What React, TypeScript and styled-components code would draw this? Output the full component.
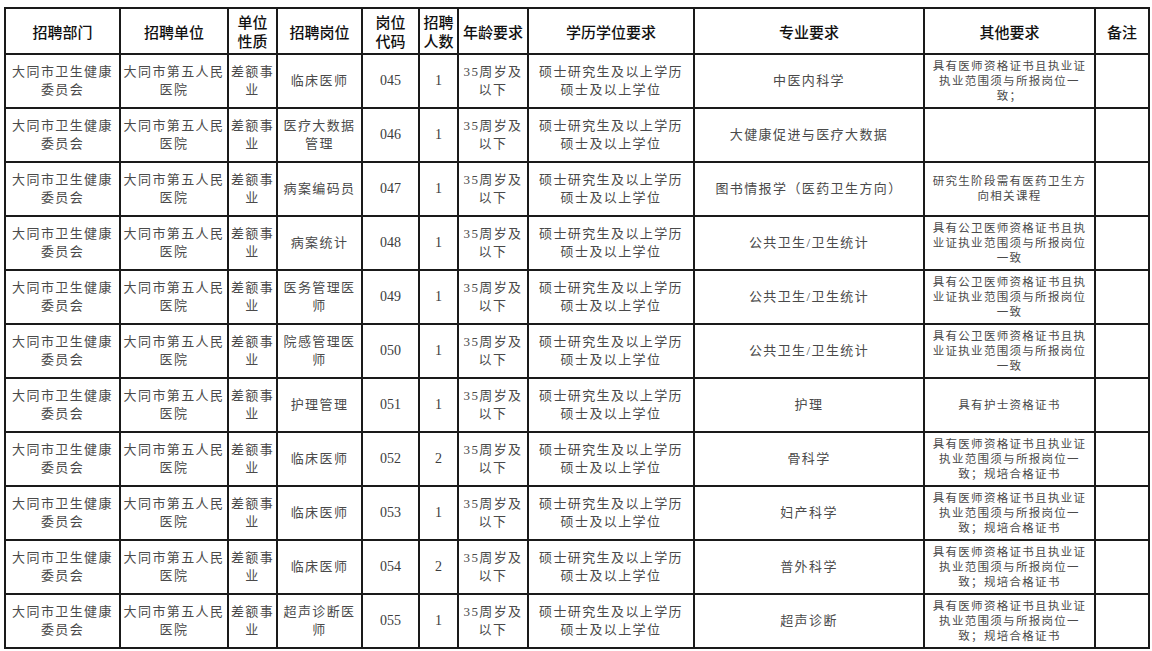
import React from 'react';
import styled, { createGlobalStyle } from 'styled-components';

const GlobalStyle = createGlobalStyle`
  html, body {
    margin: 0;
    padding: 0;
    background: #ffffff;
  }
  body {
    font-family: "Noto Sans CJK SC", "Noto Sans", sans-serif;
  }
`;

const Page = styled.div`
  width: 1152px;
  height: 651px;
  padding: 7px 0 0 4px;
  box-sizing: border-box;
  background: #fff;
`;

const Sheet = styled.table`
  border-collapse: collapse;
  table-layout: fixed;
  width: 1144px;
  border: 2px solid #111;
`;

const HeadRow = styled.tr`
  height: 46px;
`;

const BodyRow = styled.tr`
  height: 54px;
`;

const HeadCell = styled.th`
  border: 2px solid #1a1a1a;
  padding: 0;
  font-family: "Noto Sans CJK SC", sans-serif;
  font-weight: 500;
  font-size: 15px;
  line-height: 19px;
  color: #111;
  text-align: center;
  vertical-align: middle;
`;

const Cell = styled.td<{ $small?: boolean; $num?: boolean }>`
  border: 2px solid #1a1a1a;
  padding: 0;
  text-align: center;
  vertical-align: middle;
  color: ${p => (p.$num ? '#3c3c3c' : '#4a4a4a')};
  font-family: "Liberation Serif", "Noto Sans CJK SC", serif;
  font-size: ${p => (p.$small ? '11.5px' : p.$num ? '14px' : '13px')};
  line-height: ${p => (p.$small ? '15px' : '18px')};
  letter-spacing: ${p => (p.$small ? '1.3px' : p.$num ? '0' : '1.4px')};
  white-space: nowrap;
`;

const Line = styled.div`
  display: block;
`;

const widths = [115, 108, 49, 85, 57, 39, 70, 166, 230, 171, 54];

const headers: string[][] = [
  ['招聘部门'],
  ['招聘单位'],
  ['单位', '性质'],
  ['招聘岗位'],
  ['岗位', '代码'],
  ['招聘', '人数'],
  ['年龄要求'],
  ['学历学位要求'],
  ['专业要求'],
  ['其他要求'],
  ['备注'],
];

interface Post {
  name: string[];
  code: string;
  count: string;
  major: string;
  other: string[];
}

const doctorNote = ['具有医师资格证书且执业证', '执业范围须与所报岗位一', '致；规培合格证书'];
const publicNote = ['具有公卫医师资格证书且执', '业证执业范围须与所报岗位', '一致'];

const posts: Post[] = [
  { name: ['临床医师'], code: '045', count: '1', major: '中医内科学', other: ['具有医师资格证书且执业证', '执业范围须与所报岗位一', '致；'] },
  { name: ['医疗大数据', '管理'], code: '046', count: '1', major: '大健康促进与医疗大数据', other: [] },
  { name: ['病案编码员'], code: '047', count: '1', major: '图书情报学（医药卫生方向）', other: ['研究生阶段需有医药卫生方', '向相关课程'] },
  { name: ['病案统计'], code: '048', count: '1', major: '公共卫生/卫生统计', other: publicNote },
  { name: ['医务管理医', '师'], code: '049', count: '1', major: '公共卫生/卫生统计', other: publicNote },
  { name: ['院感管理医', '师'], code: '050', count: '1', major: '公共卫生/卫生统计', other: publicNote },
  { name: ['护理管理'], code: '051', count: '1', major: '护理', other: ['具有护士资格证书'] },
  { name: ['临床医师'], code: '052', count: '2', major: '骨科学', other: doctorNote },
  { name: ['临床医师'], code: '053', count: '1', major: '妇产科学', other: doctorNote },
  { name: ['临床医师'], code: '054', count: '2', major: '普外科学', other: doctorNote },
  { name: ['超声诊断医', '师'], code: '055', count: '1', major: '超声诊断', other: doctorNote },
];

const Lines: React.FC<{ lines: string[] }> = ({ lines }) => (
  <>
    {lines.map((l, i) => (
      <Line key={i}>{l}</Line>
    ))}
  </>
);

export default function App() {
  return (
    <>
      <GlobalStyle />
      <Page>
        <Sheet>
          <colgroup>
            {widths.map((w, i) => (
              <col key={i} style={{ width: w }} />
            ))}
          </colgroup>
          <thead>
            <HeadRow>
              {headers.map((h, i) => (
                <HeadCell key={i}>
                  <Lines lines={h} />
                </HeadCell>
              ))}
            </HeadRow>
          </thead>
          <tbody>
            {posts.map(p => (
              <BodyRow key={p.code}>
                <Cell><Lines lines={['大同市卫生健康', '委员会']} /></Cell>
                <Cell><Lines lines={['大同市第五人民', '医院']} /></Cell>
                <Cell><Lines lines={['差额事', '业']} /></Cell>
                <Cell><Lines lines={p.name} /></Cell>
                <Cell $num>{p.code}</Cell>
                <Cell $num>{p.count}</Cell>
                <Cell><Lines lines={['35周岁及', '以下']} /></Cell>
                <Cell><Lines lines={['硕士研究生及以上学历', '硕士及以上学位']} /></Cell>
                <Cell>{p.major}</Cell>
                <Cell $small><Lines lines={p.other} /></Cell>
                <Cell />
              </BodyRow>
            ))}
          </tbody>
        </Sheet>
      </Page>
    </>
  );
}
